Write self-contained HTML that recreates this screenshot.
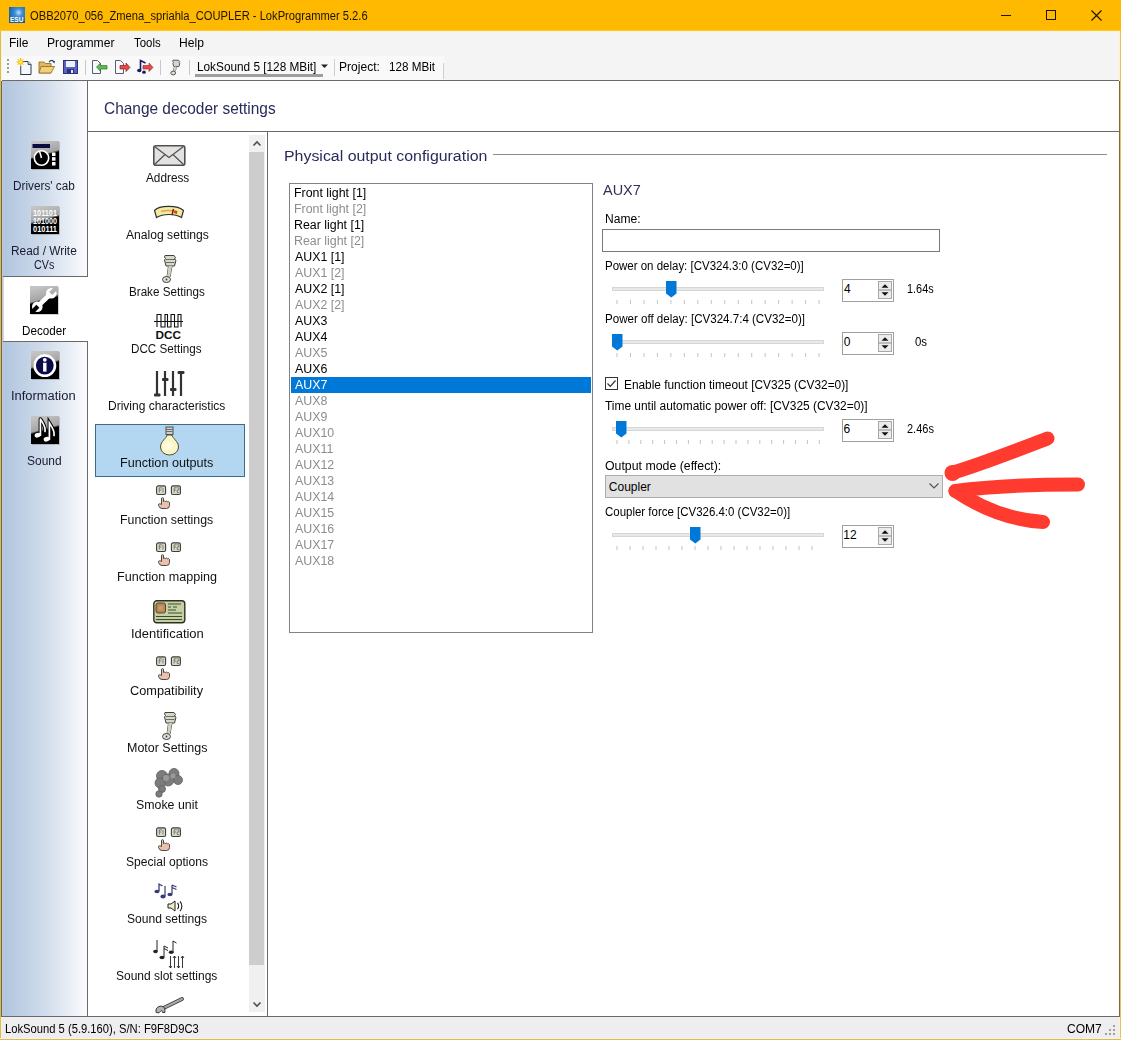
<!DOCTYPE html>
<html><head><meta charset="utf-8">
<style>
*{box-sizing:border-box;margin:0;padding:0}
html,body{width:1121px;height:1040px;overflow:hidden;background:#fff}
body{position:relative;font-family:"Liberation Sans",sans-serif;font-size:12px;color:#000}
.a{position:absolute}
.t{position:absolute;white-space:pre;line-height:1}
svg{position:absolute;overflow:visible}
</style></head><body>
<div class="a" style="left:0px;top:0px;width:1121px;height:30px;background:#FFB900;"></div>
<svg style="left:9px;top:7px" width="16" height="16"><defs><radialGradient id="esu" cx="0.6" cy="0.35" r="0.7"><stop offset="0" stop-color="#bfe3ff"/><stop offset="0.35" stop-color="#3b8fd6"/><stop offset="1" stop-color="#1a5a9a"/></radialGradient></defs><rect x="0" y="0" width="16" height="16" fill="url(#esu)"/><text x="1" y="14.5" font-family="Liberation Sans" font-weight="bold" font-size="6.5" fill="#fff">ESU</text></svg>
<div class="t" style="left:30.47px;top:9.96px;font-size:12.21px;transform:scaleX(0.9150);transform-origin:0 0;color:#1c1400;">OBB2070_056_Zmena_spriahla_COUPLER - LokProgrammer 5.2.6</div>
<div class="a" style="left:1001px;top:15px;width:10px;height:1px;background:#1c1400;"></div>
<div class="a" style="left:1046px;top:10px;width:10px;height:10px;border:1px solid #1c1400"></div>
<svg style="left:1091px;top:10px" width="11" height="11"><path d="M0.5 0.5L10.5 10.5M10.5 0.5L0.5 10.5" stroke="#1c1400" stroke-width="1.1"/></svg>
<div class="a" style="left:0px;top:30px;width:1px;height:1010px;background:#D2BC6C;"></div>
<div class="a" style="left:1px;top:31px;width:1px;height:50px;background:#FFF3C0;"></div>
<div class="a" style="left:1px;top:81px;width:1px;height:936px;background:#7A6634;"></div>
<div class="a" style="left:1px;top:1017px;width:1px;height:21px;background:#FFF3C8;"></div>
<div class="a" style="left:1120px;top:30px;width:1px;height:1010px;background:#E2C260;"></div>
<div class="a" style="left:1119px;top:31px;width:1px;height:50px;background:#FFF3C0;"></div>
<div class="a" style="left:1119px;top:81px;width:1px;height:936px;background:#7A6A35;"></div>
<div class="a" style="left:1119px;top:1017px;width:1px;height:21px;background:#FFF3C8;"></div>
<div class="a" style="left:0px;top:1038px;width:1121px;height:1px;background:#FFF3C8;"></div>
<div class="a" style="left:0px;top:1039px;width:1121px;height:1px;background:#CFBB70;"></div>
<div class="a" style="left:0px;top:30px;width:1121px;height:1px;background:#F5C842;"></div>
<div class="a" style="left:2px;top:31px;width:1117px;height:49px;background:#F4F4F4;"></div>
<div class="a" style="left:2px;top:31px;width:1117px;height:1px;background:#FFF3C8;"></div>
<div class="t" style="left:9.21px;top:37.26px;font-size:12.21px;transform:scaleX(0.9818);transform-origin:0 0;color:#000;">File</div>
<div class="t" style="left:46.50px;top:37.26px;font-size:12.21px;transform:scaleX(0.9950);transform-origin:0 0;color:#000;">Programmer</div>
<div class="t" style="left:133.74px;top:37.26px;font-size:12.21px;transform:scaleX(0.9350);transform-origin:0 0;color:#000;">Tools</div>
<div class="t" style="left:178.60px;top:37.26px;font-size:12.21px;transform:scaleX(0.9918);transform-origin:0 0;color:#000;">Help</div>
<div class="a" style="left:2px;top:80px;width:1117px;height:1px;background:#6a6a6a;"></div>
<div class="a" style="left:2px;top:56px;width:442px;height:24px;background:#F9F9F9;"></div>
<div class="a" style="left:7px;top:59px;width:2px;height:2px;background:#9a9a9a;"></div>
<div class="a" style="left:7px;top:63px;width:2px;height:2px;background:#9a9a9a;"></div>
<div class="a" style="left:7px;top:67px;width:2px;height:2px;background:#9a9a9a;"></div>
<div class="a" style="left:7px;top:71px;width:2px;height:2px;background:#9a9a9a;"></div>
<svg style="left:16px;top:58px" width="17" height="17">
<path d="M4.5 3.5H12l3 3v10h-10.5z" fill="#f4f8fc" stroke="#2a3850" stroke-width="1"/>
<path d="M12 3.5v3h3" fill="#c8d4e4" stroke="#2a3850" stroke-width="0.8"/>
<path d="M5 16V8" stroke="#8aa0c0" stroke-width="1"/>
<circle cx="4.5" cy="4" r="2.6" fill="#ffd200"/>
<path d="M4.5 0v8M0.5 4h8M1.7 1.2l5.6 5.6M7.3 1.2l-5.6 5.6" stroke="#f5b800" stroke-width="1"/>
<circle cx="4.5" cy="4" r="1.8" fill="#ffe860"/>
</svg>
<svg style="left:38px;top:59px" width="18" height="16">
<path d="M1 3h5l1.5 1.5H13V14H1z" fill="#e2b860" stroke="#8a6a20" stroke-width="0.8"/>
<path d="M3 7.5h13.5L13 14H1z" fill="#f2cf78" stroke="#8a6a20" stroke-width="0.8"/>
<path d="M11 3.2c1.5-2.5 4-2.5 5 0" fill="none" stroke="#2a4a7a" stroke-width="1.2"/>
<path d="M14.5 2.5l2 2 0.5-2.8z" fill="#2a4a7a"/>
</svg>
<svg style="left:63px;top:60px" width="15" height="14">
<rect x="0.5" y="0.5" width="14" height="13" fill="#5a62c0" stroke="#2c327a" stroke-width="1"/>
<rect x="3" y="1" width="9" height="6" fill="#eef0ff"/>
<rect x="4" y="9" width="7" height="4.5" fill="#2c327a"/>
<rect x="8" y="10" width="2" height="3" fill="#e8e8ff"/>
</svg>
<div class="a" style="left:85px;top:60px;width:1px;height:15px;background:#c8c8c8;"></div>
<svg style="left:92px;top:60px" width="16" height="14">
<path d="M0.5 0.5h5l3 3v10h-8z" fill="#f6f8fa" stroke="#40506a" stroke-width="0.9"/>
<path d="M4.5 7l4-4v2.5h6.5v3.5H8.5V11.5z" fill="#5fb85a" stroke="#2f7a2a" stroke-width="0.7"/>
</svg>
<svg style="left:115px;top:60px" width="16" height="14">
<path d="M0.5 0.5h5l3 3v10h-8z" fill="#f6f8fa" stroke="#40506a" stroke-width="0.9"/>
<path d="M15 7.5l-4 4V9H5V5.5h6V3z" fill="#e84848" stroke="#902020" stroke-width="0.7"/>
</svg>
<svg style="left:137px;top:59px" width="17" height="15">
<path d="M3.5 11V1.5l5 2.5" fill="none" stroke="#1a1a6a" stroke-width="1.6"/>
<ellipse cx="2.3" cy="11.5" rx="2.2" ry="1.8" fill="#1a1a6a"/>
<ellipse cx="7" cy="13.2" rx="1.8" ry="1.6" fill="#1a1a6a"/>
<path d="M16 8.5l-4 4V10H6V6.5h6V4z" fill="#e84848" stroke="#902020" stroke-width="0.6"/>
</svg>
<div class="a" style="left:160px;top:60px;width:1px;height:15px;background:#c8c8c8;"></div>
<svg style="left:170px;top:59px" width="11" height="17">
<path d="M3 1.2h5.5l1.2 1.3-0.8 1 1 0.8-1 3.2H3.8L2.8 4.3 3.5 3.3 2.6 2.3z" fill="#d6d6c8" stroke="#4a4a4a" stroke-width="0.9"/>
<path d="M4.5 7.5L3.2 12.5M6.8 7.5L5 12.5" stroke="#4a4a4a" stroke-width="0.8"/>
<path d="M4.5 7.5L3.2 12.5h1.8l1.8-5z" fill="#d0d0c4"/>
<ellipse cx="3.2" cy="14" rx="2.4" ry="1.9" fill="#e0e0d8" stroke="#4a4a4a" stroke-width="0.9"/>
</svg>
<div class="a" style="left:189px;top:60px;width:1px;height:15px;background:#c8c8c8;"></div>
<div class="t" style="left:196.83px;top:61.06px;font-size:12.21px;transform:scaleX(0.9666);transform-origin:0 0;color:#000;">LokSound 5 [128 MBit]</div>
<svg style="left:321px;top:64px" width="7" height="5"><path d="M0 0.5h7L3.5 4z" fill="#222"/></svg>
<div class="a" style="left:195px;top:74px;width:128px;height:3px;background:#9e9e9e;"></div>
<div class="a" style="left:334px;top:59px;width:1px;height:17px;background:#cfcfcf;"></div>
<div class="t" style="left:339.01px;top:61.06px;font-size:12.21px;transform:scaleX(0.9877);transform-origin:0 0;color:#000;">Project:</div>
<div class="t" style="left:388.72px;top:61.06px;font-size:12.21px;transform:scaleX(0.9564);transform-origin:0 0;color:#000;">128 MBit</div>
<div class="a" style="left:443px;top:63px;width:1px;height:16px;background:#cfcfcf;"></div>
<div class="a" style="left:2px;top:81px;width:86px;height:935px;background:linear-gradient(to right,#B0C5DF 0%,#D0DCEB 50%,#FCFCFE 100%);"></div>
<div class="a" style="left:87px;top:81px;width:1px;height:935px;background:#6a6a6a;"></div>
<div class="a" style="left:2px;top:81px;width:1px;height:935px;background:#C2C7CD;"></div>
<div class="a" style="left:3px;top:276px;width:85px;height:66px;background:#FFFFFF;"></div>
<div class="a" style="left:3px;top:276px;width:85px;height:1px;background:#6a6a6a;"></div>
<div class="a" style="left:3px;top:341px;width:85px;height:1px;background:#6a6a6a;"></div>
<div class="a" style="left:3px;top:277px;width:1px;height:64px;background:#d8d8d8;"></div>
<svg style="left:31px;top:141px" width="29" height="29"><defs><linearGradient id="ib" x1="0.36" y1="0" x2="0.64" y2="1"><stop offset="0" stop-color="#c4c4c4"/><stop offset="0.45" stop-color="#a4a4a4"/><stop offset="0.52" stop-color="#000"/><stop offset="1" stop-color="#000"/></linearGradient></defs><rect x="1" y="1" width="28" height="28" fill="#000" opacity="0.18"/><rect x="0" y="0" width="28" height="28" fill="url(#ib)"/><rect x="1.5" y="3" width="17.5" height="4" fill="#0a0a40"/><circle cx="10.5" cy="17" r="7.2" fill="#000" stroke="#fff" stroke-width="1.6"/><path d="M10.5 17L8.6 10.5" stroke="#fff" stroke-width="1.5"/><rect x="21" y="11.5" width="3.5" height="3.5" fill="#fff"/><rect x="21" y="16.2" width="3.5" height="3.5" fill="#fff"/><rect x="21" y="21" width="3.5" height="3.5" fill="#fff"/></svg>
<div class="t" style="left:12.53px;top:179.66px;font-size:12.21px;transform:scaleX(0.9653);transform-origin:0 0;color:#1a1a30;">Drivers' cab</div>
<svg style="left:31px;top:206px" width="29" height="29"><defs><linearGradient id="ib" x1="0.36" y1="0" x2="0.64" y2="1"><stop offset="0" stop-color="#c4c4c4"/><stop offset="0.45" stop-color="#a4a4a4"/><stop offset="0.52" stop-color="#000"/><stop offset="1" stop-color="#000"/></linearGradient></defs><rect x="1" y="1" width="28" height="28" fill="#000" opacity="0.18"/><rect x="0" y="0" width="28" height="28" fill="url(#ib)"/><text x="2" y="10" font-family="Liberation Sans" font-size="8.5" font-weight="bold" fill="#fff" textLength="24" lengthAdjust="spacingAndGlyphs">101101</text><text x="2" y="18" font-family="Liberation Sans" font-size="8.5" font-weight="bold" fill="#fff" textLength="24" lengthAdjust="spacingAndGlyphs">101000</text><text x="2" y="25.8" font-family="Liberation Sans" font-size="8.5" font-weight="bold" fill="#fff" textLength="24" lengthAdjust="spacingAndGlyphs">010111</text></svg>
<div class="t" style="left:10.52px;top:245.06px;font-size:12.21px;transform:scaleX(0.9730);transform-origin:0 0;color:#1a1a30;">Read / Write</div>
<div class="t" style="left:34.06px;top:259.46px;font-size:12.21px;transform:scaleX(0.8848);transform-origin:0 0;color:#1a1a30;">CVs</div>
<svg style="left:30px;top:286px" width="29" height="29"><defs><linearGradient id="ib" x1="0.36" y1="0" x2="0.64" y2="1"><stop offset="0" stop-color="#c4c4c4"/><stop offset="0.45" stop-color="#a4a4a4"/><stop offset="0.52" stop-color="#000"/><stop offset="1" stop-color="#000"/></linearGradient></defs><rect x="1" y="1" width="28" height="28" fill="#000" opacity="0.18"/><rect x="0" y="0" width="28" height="28" fill="url(#ib)"/><defs><mask id="wm"><rect width="28" height="28" fill="#fff"/><rect x="-2" y="-4" width="4.2" height="8" fill="#000" transform="translate(23.5,4.5) rotate(45)"/><rect x="-2" y="-4" width="4.2" height="8" fill="#000" transform="translate(5,23) rotate(45)"/></mask></defs><g mask="url(#wm)" fill="#fff"><circle cx="21.3" cy="7.2" r="5.3"/><circle cx="7.3" cy="20.8" r="5.3"/><path d="M8.5 19.5L20 8.5" stroke="#fff" stroke-width="4.6"/></g></svg>
<div class="t" style="left:21.74px;top:324.86px;font-size:12.21px;transform:scaleX(0.9564);transform-origin:0 0;color:#000;">Decoder</div>
<svg style="left:31px;top:351px" width="29" height="29"><defs><linearGradient id="ib" x1="0.36" y1="0" x2="0.64" y2="1"><stop offset="0" stop-color="#c4c4c4"/><stop offset="0.45" stop-color="#a4a4a4"/><stop offset="0.52" stop-color="#000"/><stop offset="1" stop-color="#000"/></linearGradient></defs><rect x="1" y="1" width="28" height="28" fill="#000" opacity="0.18"/><rect x="0" y="0" width="28" height="28" fill="url(#ib)"/><circle cx="13.8" cy="14.6" r="10.9" fill="#000" stroke="#000" stroke-width="1"/><circle cx="13.8" cy="14.6" r="10.2" fill="#0a0a48" stroke="#fff" stroke-width="2.6"/><circle cx="13.8" cy="8.8" r="1.9" fill="#fff"/><rect x="12.1" y="11.8" width="3.4" height="8.8" fill="#fff"/></svg>
<div class="t" style="left:10.91px;top:389.56px;font-size:12.21px;transform:scaleX(1.0577);transform-origin:0 0;color:#1a1a30;">Information</div>
<svg style="left:31px;top:416px" width="29" height="29"><defs><linearGradient id="ib" x1="0.36" y1="0" x2="0.64" y2="1"><stop offset="0" stop-color="#c4c4c4"/><stop offset="0.45" stop-color="#a4a4a4"/><stop offset="0.52" stop-color="#000"/><stop offset="1" stop-color="#000"/></linearGradient></defs><rect x="1" y="1" width="28" height="28" fill="#000" opacity="0.18"/><rect x="0" y="0" width="28" height="28" fill="url(#ib)"/><path d="M9.4 19.2V3C10.9 5.5 15 10.5 14 15.5" fill="none" stroke="#000" stroke-width="3.6" stroke-linecap="round" stroke-linejoin="round"/><ellipse cx="6.6" cy="19.2" rx="4" ry="3.2" transform="rotate(-20 6.6 19.2)" fill="#000"/><path d="M9.4 19.2V3C10.9 5.5 15 10.5 14 15.5" fill="none" stroke="#fff" stroke-width="1.7" stroke-linecap="round" stroke-linejoin="round"/><ellipse cx="6.6" cy="19.2" rx="3" ry="2.3" transform="rotate(-20 6.6 19.2)" fill="#fff"/><path d="M18.4 23.2V7C19.9 9.5 24 14.5 23 19.5" fill="none" stroke="#000" stroke-width="3.6" stroke-linecap="round"/><ellipse cx="15.6" cy="23.2" rx="4" ry="3.2" transform="rotate(-20 15.6 23.2)" fill="#000"/><path d="M18.4 23.2V7C19.9 9.5 24 14.5 23 19.5" fill="none" stroke="#fff" stroke-width="1.7" stroke-linecap="round"/><ellipse cx="15.6" cy="23.2" rx="3" ry="2.3" transform="rotate(-20 15.6 23.2)" fill="#fff"/></svg>
<div class="t" style="left:26.76px;top:454.56px;font-size:12.21px;transform:scaleX(0.9802);transform-origin:0 0;color:#1a1a30;">Sound</div>
<div class="t" style="left:103.73px;top:99.52px;font-size:16.28px;transform:scaleX(0.9491);transform-origin:0 0;color:#2a2a5a;">Change decoder settings</div>
<div class="a" style="left:88px;top:131px;width:1031px;height:1px;background:#6a6a6a;"></div>
<div class="a" style="left:249px;top:135px;width:16px;height:877px;background:#F0F0F0;"></div>
<div class="a" style="left:249px;top:152px;width:15px;height:813px;background:#CDCDCD;"></div>
<svg style="left:249px;top:135px" width="16" height="17"><path d="M4.5 10.5L8 7l3.5 3.5" fill="none" stroke="#505050" stroke-width="1.6"/></svg>
<svg style="left:249px;top:996px" width="16" height="17"><path d="M4.5 6.5L8 10l3.5-3.5" fill="none" stroke="#505050" stroke-width="1.6"/></svg>
<div class="a" style="left:267px;top:131px;width:1px;height:885px;background:#6a6a6a;"></div>
<div class="a" style="left:95px;top:424px;width:150px;height:53px;background:#B3D6F1;border:1px solid #3B6C8C"></div>
<div class="t" style="left:145.67px;top:172.26px;font-size:12.21px;transform:scaleX(0.9657);transform-origin:0 0;color:#111;">Address</div>
<div class="t" style="left:125.84px;top:229.26px;font-size:12.21px;transform:scaleX(0.9931);transform-origin:0 0;color:#111;">Analog settings</div>
<div class="t" style="left:128.94px;top:286.26px;font-size:12.21px;transform:scaleX(0.9544);transform-origin:0 0;color:#111;">Brake Settings</div>
<div class="t" style="left:131.49px;top:343.26px;font-size:12.21px;transform:scaleX(0.9556);transform-origin:0 0;color:#111;">DCC Settings</div>
<div class="t" style="left:108.11px;top:400.26px;font-size:12.21px;transform:scaleX(0.9833);transform-origin:0 0;color:#111;">Driving characteristics</div>
<div class="t" style="left:120.11px;top:457.26px;font-size:12.21px;transform:scaleX(1.0343);transform-origin:0 0;color:#111;">Function outputs</div>
<div class="t" style="left:120.18px;top:514.26px;font-size:12.21px;transform:scaleX(1.0103);transform-origin:0 0;color:#111;">Function settings</div>
<div class="t" style="left:117.01px;top:571.26px;font-size:12.21px;transform:scaleX(1.0298);transform-origin:0 0;color:#111;">Function mapping</div>
<div class="t" style="left:130.50px;top:628.26px;font-size:12.21px;transform:scaleX(1.0621);transform-origin:0 0;color:#111;">Identification</div>
<div class="t" style="left:130.26px;top:685.26px;font-size:12.21px;transform:scaleX(1.0454);transform-origin:0 0;color:#111;">Compatibility</div>
<div class="t" style="left:126.60px;top:742.26px;font-size:12.21px;transform:scaleX(1.0215);transform-origin:0 0;color:#111;">Motor Settings</div>
<div class="t" style="left:135.94px;top:799.26px;font-size:12.21px;transform:scaleX(1.0126);transform-origin:0 0;color:#111;">Smoke unit</div>
<div class="t" style="left:126.01px;top:856.26px;font-size:12.21px;transform:scaleX(0.9910);transform-origin:0 0;color:#111;">Special options</div>
<div class="t" style="left:127.06px;top:913.26px;font-size:12.21px;transform:scaleX(0.9901);transform-origin:0 0;color:#111;">Sound settings</div>
<div class="t" style="left:116.36px;top:970.26px;font-size:12.21px;transform:scaleX(0.9825);transform-origin:0 0;color:#111;">Sound slot settings</div>
<svg style="left:153px;top:145px" width="33" height="22"><rect x="0.8" y="0.8" width="31" height="19.5" rx="2" fill="#e4e2e0" stroke="#505050" stroke-width="1.6"/><path d="M1.5 1.5L16 12.5L30.5 1.5M1.5 19.5L12 9.5M30.5 19.5L20 9.5" fill="none" stroke="#505050" stroke-width="1.2"/></svg>
<svg style="left:153px;top:204px" width="32" height="16"><path d="M1.5 6.5C6 1 25 1 30.5 6.5L28.5 13.5C22 9.5 10 9.5 3.5 13.5Z" fill="#f2eca0" stroke="#303030" stroke-width="1.2"/><path d="M8 7.5C14 6 18 6 24 7.5" stroke="#e8a060" stroke-width="1.5" fill="none"/><path d="M20.5 5L19 11" stroke="#702010" stroke-width="1.4"/><path d="M21.5 6.5l3 0.8-0.6 2.6-3-0.8z" fill="#e04010"/></svg>
<svg style="left:161px;top:254px" width="18" height="30"><path d="M4 1.5h9l1.5 2-1 1.5 1.5 1.2-1.5 5.8H5L3.5 6 4.5 4.5 3.5 3z" fill="#d8d8c8" stroke="#404040" stroke-width="1"/><path d="M5 5.5h9M5 8.5h8.5" stroke="#505050" stroke-width="0.8"/><path d="M7.5 12l-1.5 11M11 12l-2 11" stroke="#404040" stroke-width="1"/><path d="M7.5 12l-1.5 11h3l2-11z" fill="#d0d0c0"/><ellipse cx="5.5" cy="25.5" rx="4" ry="3" fill="#e0e0d4" stroke="#404040" stroke-width="1"/><circle cx="5.5" cy="25.5" r="0.9" fill="#404040"/></svg>
<svg style="left:161px;top:711px" width="18" height="30"><path d="M4 1.5h9l1.5 2-1 1.5 1.5 1.2-1.5 5.8H5L3.5 6 4.5 4.5 3.5 3z" fill="#d8d8c8" stroke="#404040" stroke-width="1"/><path d="M5 5.5h9M5 8.5h8.5" stroke="#505050" stroke-width="0.8"/><path d="M7.5 12l-1.5 11M11 12l-2 11" stroke="#404040" stroke-width="1"/><path d="M7.5 12l-1.5 11h3l2-11z" fill="#d0d0c0"/><ellipse cx="5.5" cy="25.5" rx="4" ry="3" fill="#e0e0d4" stroke="#404040" stroke-width="1"/><circle cx="5.5" cy="25.5" r="0.9" fill="#404040"/></svg>
<svg style="left:153px;top:313px" width="32" height="27"><path d="M1 8.5H30" stroke="#111" stroke-width="1"/><path d="M4 14V1.5h4V14h4V1.5h2.5V14H18V1.5h3.5V14H25V1.5h3V14" fill="none" stroke="#111" stroke-width="1.1"/><text x="2.5" y="25.5" font-family="Liberation Sans" font-weight="bold" font-size="10.5" fill="#111" textLength="25.5" lengthAdjust="spacingAndGlyphs">DCC</text></svg>
<svg style="left:153px;top:369px" width="33" height="30"><g stroke="#333" stroke-width="2.2"><path d="M4 2V27M12 2V27M20 2V27M28 4V27"/></g><g fill="#333"><rect x="1" y="24.5" width="6.5" height="3" rx="1"/><rect x="9" y="9" width="6.5" height="3" rx="1"/><rect x="17" y="19" width="6.5" height="3" rx="1"/><rect x="24.5" y="2" width="7" height="3" rx="1.2"/></g></svg>
<svg style="left:159px;top:426px" width="22" height="30"><rect x="7" y="1" width="7" height="7.5" fill="#cfcfcf" stroke="#404040" stroke-width="0.9"/><path d="M7.5 3.5h6M7.5 5.5h6" stroke="#404040" stroke-width="0.7"/><path d="M8 9C8 12 1.5 15 1.5 21a9 8 0 0 0 18 0c0-6-6.5-9-6.5-12z" fill="#f9f5c8" stroke="#505030" stroke-width="1"/><ellipse cx="9" cy="20" rx="5" ry="4" fill="#fffbe0" opacity="0.8"/></svg>
<svg style="left:155px;top:485px" width="27" height="24"><rect x="1.6" y="0.9" width="9" height="8.6" rx="1.6" fill="#d9dcc9" stroke="#3c3c3c" stroke-width="1.1"/><rect x="16.4" y="0.9" width="9" height="8.6" rx="1.6" fill="#d9dcc9" stroke="#3c3c3c" stroke-width="1.1"/><path d="M4.3 7.6V2.8h2.6M4.3 5h2.1M8 2.8v4.8" stroke="#606058" stroke-width="0.75" fill="none"/><path d="M19.1 7.6V2.8h2.6M19.1 5h2.1M22.2 2.8h1.6v2.2h-1.6v2.6h1.8" stroke="#606058" stroke-width="0.75" fill="none"/><path d="M6.5 19V13.2Q7.5 12 8.5 13.2V16.5Q9.5 15.5 10.5 16.5Q11.5 15.5 12.5 16.8Q13.5 16 14.5 17.5V20.5Q14.5 23.5 11.5 23.5H7Q4.5 23.5 3.5 20.5Q3 19 4.5 18.8Q5.8 18.8 6.5 19.5Z" fill="#ecc0ac" stroke="#3a3a3a" stroke-width="0.9"/></svg>
<svg style="left:155px;top:542px" width="27" height="24"><rect x="1.6" y="0.9" width="9" height="8.6" rx="1.6" fill="#d9dcc9" stroke="#3c3c3c" stroke-width="1.1"/><rect x="16.4" y="0.9" width="9" height="8.6" rx="1.6" fill="#d9dcc9" stroke="#3c3c3c" stroke-width="1.1"/><path d="M4.3 7.6V2.8h2.6M4.3 5h2.1M8 2.8v4.8" stroke="#606058" stroke-width="0.75" fill="none"/><path d="M19.1 7.6V2.8h2.6M19.1 5h2.1M22.2 2.8h1.6v2.2h-1.6v2.6h1.8" stroke="#606058" stroke-width="0.75" fill="none"/><path d="M6.5 19V13.2Q7.5 12 8.5 13.2V16.5Q9.5 15.5 10.5 16.5Q11.5 15.5 12.5 16.8Q13.5 16 14.5 17.5V20.5Q14.5 23.5 11.5 23.5H7Q4.5 23.5 3.5 20.5Q3 19 4.5 18.8Q5.8 18.8 6.5 19.5Z" fill="#ecc0ac" stroke="#3a3a3a" stroke-width="0.9"/></svg>
<svg style="left:155px;top:656px" width="27" height="24"><rect x="1.6" y="0.9" width="9" height="8.6" rx="1.6" fill="#d9dcc9" stroke="#3c3c3c" stroke-width="1.1"/><rect x="16.4" y="0.9" width="9" height="8.6" rx="1.6" fill="#d9dcc9" stroke="#3c3c3c" stroke-width="1.1"/><path d="M4.3 7.6V2.8h2.6M4.3 5h2.1M8 2.8v4.8" stroke="#606058" stroke-width="0.75" fill="none"/><path d="M19.1 7.6V2.8h2.6M19.1 5h2.1M22.2 2.8h1.6v2.2h-1.6v2.6h1.8" stroke="#606058" stroke-width="0.75" fill="none"/><path d="M6.5 19V13.2Q7.5 12 8.5 13.2V16.5Q9.5 15.5 10.5 16.5Q11.5 15.5 12.5 16.8Q13.5 16 14.5 17.5V20.5Q14.5 23.5 11.5 23.5H7Q4.5 23.5 3.5 20.5Q3 19 4.5 18.8Q5.8 18.8 6.5 19.5Z" fill="#ecc0ac" stroke="#3a3a3a" stroke-width="0.9"/></svg>
<svg style="left:155px;top:827px" width="27" height="24"><rect x="1.6" y="0.9" width="9" height="8.6" rx="1.6" fill="#d9dcc9" stroke="#3c3c3c" stroke-width="1.1"/><rect x="16.4" y="0.9" width="9" height="8.6" rx="1.6" fill="#d9dcc9" stroke="#3c3c3c" stroke-width="1.1"/><path d="M4.3 7.6V2.8h2.6M4.3 5h2.1M8 2.8v4.8" stroke="#606058" stroke-width="0.75" fill="none"/><path d="M19.1 7.6V2.8h2.6M19.1 5h2.1M22.2 2.8h1.6v2.2h-1.6v2.6h1.8" stroke="#606058" stroke-width="0.75" fill="none"/><path d="M6.5 19V13.2Q7.5 12 8.5 13.2V16.5Q9.5 15.5 10.5 16.5Q11.5 15.5 12.5 16.8Q13.5 16 14.5 17.5V20.5Q14.5 23.5 11.5 23.5H7Q4.5 23.5 3.5 20.5Q3 19 4.5 18.8Q5.8 18.8 6.5 19.5Z" fill="#ecc0ac" stroke="#3a3a3a" stroke-width="0.9"/></svg>
<svg style="left:153px;top:600px" width="33" height="24"><rect x="0.8" y="0.8" width="31" height="22" rx="3" fill="#c4d0a4" stroke="#303020" stroke-width="1.4"/><rect x="3" y="3" width="9.5" height="10" rx="2" fill="#b8885a" stroke="#4a3a20" stroke-width="0.9"/><circle cx="7.7" cy="8" r="2.5" fill="#d09868"/><path d="M15 4h13M15 7h3M20 7h4M15 10h8M15 13h14M3 16.5h26M3 19.5h26" stroke="#404a30" stroke-width="1"/></svg>
<svg style="left:154px;top:768px" width="30" height="30"><g fill="#7c7c7c" stroke="#606060" stroke-width="0.8"><circle cx="8" cy="8" r="5.5"/><circle cx="20" cy="5.5" r="5"/><circle cx="24" cy="12" r="4.5"/><circle cx="14" cy="12" r="6"/><circle cx="6" cy="15" r="5"/><circle cx="8" cy="21" r="3.5"/><circle cx="5" cy="26" r="3.2"/></g><g fill="#9a9a9a"><circle cx="12" cy="10" r="3"/><circle cx="19" cy="8" r="2.5"/></g></svg>
<svg style="left:154px;top:882px" width="30" height="30"><g fill="#3a3a78" stroke="#3a3a78"><path d="M5 9V2l3.5 2" fill="none" stroke-width="1.3"/><ellipse cx="3" cy="9.5" rx="2.6" ry="1.8" stroke="none"/><path d="M11 14V4" fill="none" stroke-width="1.2"/><ellipse cx="9" cy="14.5" rx="2.6" ry="2" stroke="none"/><path d="M18 12V3M18 3l4.5 2M18 5.5l4.5 2" fill="none" stroke-width="1.2"/><ellipse cx="16" cy="12.5" rx="2.6" ry="1.8" stroke="none"/></g><path d="M14 22h3l4-3v10l-4-3h-3z" fill="#f0f0c0" stroke="#202020" stroke-width="1"/><path d="M23.5 21c1.5 1.5 1.5 4.5 0 6M26 19.5c2.5 2.5 2.5 7 0 9.5" fill="none" stroke="#202020" stroke-width="1.1"/></svg>
<svg style="left:153px;top:939px" width="32" height="31"><g fill="#222" stroke="#222"><path d="M4 12V1" fill="none" stroke-width="1"/><ellipse cx="2.5" cy="12.5" rx="2.3" ry="1.7" stroke="none"/><path d="M11 18V7M11 7l4 2M11 9.5l4 2" fill="none" stroke-width="1"/><ellipse cx="9" cy="18.5" rx="2.5" ry="1.8" stroke="none"/><path d="M20 13V2l3.5 2" fill="none" stroke-width="1"/><ellipse cx="18.2" cy="13.3" rx="2.4" ry="1.8" stroke="none"/></g><g stroke="#222" stroke-width="0.9" fill="none"><path d="M17.5 17v12M21.5 17v12M25.5 17v12M29.5 17v12"/><path d="M16 27l1.5 2 1.5-2M20 19l1.5-2 1.5 2M24 27l1.5 2 1.5-2M28 19l1.5-2 1.5 2"/></g></svg>
<svg style="left:155px;top:997px" width="29" height="17"><path d="M8.5 11L27 2" stroke="#404040" stroke-width="3.8" stroke-linecap="round"/><path d="M8.5 11L27 2" stroke="#a8a8a8" stroke-width="2" stroke-linecap="round"/><path d="M1.2 15.5C0.2 12 2.5 9 6.5 9.2C9.5 9.5 10.5 12 9.8 15.5H7.6C7.8 13.8 6.8 13.2 5.6 14.2L4 15.8z" fill="#b4b4b4" stroke="#333" stroke-width="1"/></svg>
<div class="t" style="left:283.89px;top:148.38px;font-size:15.26px;transform:scaleX(1.0430);transform-origin:0 0;color:#2a2a5a;">Physical output configuration</div>
<div class="a" style="left:493px;top:154px;width:614px;height:1px;background:#8a8a8a;"></div>
<div class="a" style="left:289px;top:183px;width:304px;height:450px;background:#fff;border:1px solid #828282"></div>
<div class="a" style="left:291px;top:377px;width:300px;height:16px;background:#0078D7;"></div>
<div class="t" style="left:293.88px;top:187.26px;font-size:12.21px;transform:scaleX(1.0147);transform-origin:0 0;color:#000;">Front light [1]</div>
<div class="t" style="left:293.88px;top:203.26px;font-size:12.21px;transform:scaleX(1.0147);transform-origin:0 0;color:#8d8d8d;">Front light [2]</div>
<div class="t" style="left:293.88px;top:219.26px;font-size:12.21px;transform:scaleX(1.0147);transform-origin:0 0;color:#000;">Rear light [1]</div>
<div class="t" style="left:293.88px;top:235.26px;font-size:12.21px;transform:scaleX(1.0147);transform-origin:0 0;color:#8d8d8d;">Rear light [2]</div>
<div class="t" style="left:294.87px;top:251.26px;font-size:12.21px;transform:scaleX(1.0147);transform-origin:0 0;color:#000;">AUX1 [1]</div>
<div class="t" style="left:294.87px;top:267.26px;font-size:12.21px;transform:scaleX(1.0147);transform-origin:0 0;color:#8d8d8d;">AUX1 [2]</div>
<div class="t" style="left:294.87px;top:283.26px;font-size:12.21px;transform:scaleX(1.0147);transform-origin:0 0;color:#000;">AUX2 [1]</div>
<div class="t" style="left:294.87px;top:299.26px;font-size:12.21px;transform:scaleX(1.0147);transform-origin:0 0;color:#8d8d8d;">AUX2 [2]</div>
<div class="t" style="left:294.87px;top:315.26px;font-size:12.21px;transform:scaleX(1.0147);transform-origin:0 0;color:#000;">AUX3</div>
<div class="t" style="left:294.87px;top:331.26px;font-size:12.21px;transform:scaleX(1.0147);transform-origin:0 0;color:#000;">AUX4</div>
<div class="t" style="left:294.87px;top:347.26px;font-size:12.21px;transform:scaleX(1.0147);transform-origin:0 0;color:#8d8d8d;">AUX5</div>
<div class="t" style="left:294.87px;top:363.26px;font-size:12.21px;transform:scaleX(1.0147);transform-origin:0 0;color:#000;">AUX6</div>
<div class="t" style="left:294.87px;top:379.26px;font-size:12.21px;transform:scaleX(1.0147);transform-origin:0 0;color:#fff;">AUX7</div>
<div class="t" style="left:294.87px;top:395.26px;font-size:12.21px;transform:scaleX(1.0147);transform-origin:0 0;color:#8d8d8d;">AUX8</div>
<div class="t" style="left:294.87px;top:411.26px;font-size:12.21px;transform:scaleX(1.0147);transform-origin:0 0;color:#8d8d8d;">AUX9</div>
<div class="t" style="left:294.87px;top:427.26px;font-size:12.21px;transform:scaleX(1.0147);transform-origin:0 0;color:#8d8d8d;">AUX10</div>
<div class="t" style="left:294.87px;top:443.26px;font-size:12.21px;transform:scaleX(1.0147);transform-origin:0 0;color:#8d8d8d;">AUX11</div>
<div class="t" style="left:294.87px;top:459.26px;font-size:12.21px;transform:scaleX(1.0147);transform-origin:0 0;color:#8d8d8d;">AUX12</div>
<div class="t" style="left:294.87px;top:475.26px;font-size:12.21px;transform:scaleX(1.0147);transform-origin:0 0;color:#8d8d8d;">AUX13</div>
<div class="t" style="left:294.87px;top:491.26px;font-size:12.21px;transform:scaleX(1.0147);transform-origin:0 0;color:#8d8d8d;">AUX14</div>
<div class="t" style="left:294.87px;top:507.26px;font-size:12.21px;transform:scaleX(1.0147);transform-origin:0 0;color:#8d8d8d;">AUX15</div>
<div class="t" style="left:294.87px;top:523.26px;font-size:12.21px;transform:scaleX(1.0147);transform-origin:0 0;color:#8d8d8d;">AUX16</div>
<div class="t" style="left:294.87px;top:539.26px;font-size:12.21px;transform:scaleX(1.0147);transform-origin:0 0;color:#8d8d8d;">AUX17</div>
<div class="t" style="left:294.87px;top:555.26px;font-size:12.21px;transform:scaleX(1.0147);transform-origin:0 0;color:#8d8d8d;">AUX18</div>
<div class="t" style="left:603.46px;top:182.83px;font-size:14.85px;transform:scaleX(0.9739);transform-origin:0 0;color:#30305a;">AUX7</div>
<div class="t" style="left:604.70px;top:213.06px;font-size:12.21px;transform:scaleX(0.9897);transform-origin:0 0;color:#000;">Name:</div>
<div class="a" style="left:602px;top:229px;width:338px;height:23px;background:#fff;border:1px solid #7a7a7a"></div>
<div class="t" style="left:604.85px;top:260.06px;font-size:12.21px;transform:scaleX(0.9406);transform-origin:0 0;color:#000;">Power on delay: [CV324.3:0 (CV32=0)]</div>
<div class="a" style="left:612px;top:287px;width:212px;height:4px;background:#E7EAEA;border:1px solid #d6d6d6"></div>
<svg style="left:612px;top:300px" width="212" height="4"><rect x="4.50" y="0" width="1" height="4" fill="#c4c4c4"/><rect x="17.97" y="0" width="1" height="4" fill="#c4c4c4"/><rect x="31.44" y="0" width="1" height="4" fill="#c4c4c4"/><rect x="44.91" y="0" width="1" height="4" fill="#c4c4c4"/><rect x="58.38" y="0" width="1" height="4" fill="#c4c4c4"/><rect x="71.85" y="0" width="1" height="4" fill="#c4c4c4"/><rect x="85.32" y="0" width="1" height="4" fill="#c4c4c4"/><rect x="98.79" y="0" width="1" height="4" fill="#c4c4c4"/><rect x="112.26" y="0" width="1" height="4" fill="#c4c4c4"/><rect x="125.73" y="0" width="1" height="4" fill="#c4c4c4"/><rect x="139.20" y="0" width="1" height="4" fill="#c4c4c4"/><rect x="152.67" y="0" width="1" height="4" fill="#c4c4c4"/><rect x="166.14" y="0" width="1" height="4" fill="#c4c4c4"/><rect x="179.61" y="0" width="1" height="4" fill="#c4c4c4"/><rect x="193.08" y="0" width="1" height="4" fill="#c4c4c4"/><rect x="206.55" y="0" width="1" height="4" fill="#c4c4c4"/></svg>
<svg style="left:666px;top:281px" width="11" height="17"><path d="M0 0h10.5v12.5L5.25 16.5 0 12.5z" fill="#0078D7"/></svg>
<div class="a" style="left:842px;top:279px;width:52px;height:23px;background:#fff;border:1px solid #a0a0a0"></div>
<div class="t" style="left:843.93px;top:283.14px;font-size:12.00px;color:#000;">4</div>
<svg style="left:878px;top:281px" width="14" height="18"><rect x="0.5" y="0.5" width="13" height="17" fill="#ececec" stroke="#a8a8a8" stroke-width="1"/><path d="M1 9h12" stroke="#a8a8a8" stroke-width="1.4"/><path d="M3.5 6.8h7L7 3.3z" fill="#111"/><path d="M3.5 11.2h7L7 14.7z" fill="#111"/></svg>
<div class="t" style="left:906.68px;top:282.96px;font-size:12.21px;transform:scaleX(0.8935);transform-origin:0 0;color:#000;">1.64s</div>
<div class="t" style="left:604.55px;top:313.06px;font-size:12.21px;transform:scaleX(0.9478);transform-origin:0 0;color:#000;">Power off delay: [CV324.7:4 (CV32=0)]</div>
<div class="a" style="left:612px;top:340px;width:212px;height:4px;background:#E7EAEA;border:1px solid #d6d6d6"></div>
<svg style="left:612px;top:353px" width="212" height="4"><rect x="4.50" y="0" width="1" height="4" fill="#c4c4c4"/><rect x="17.97" y="0" width="1" height="4" fill="#c4c4c4"/><rect x="31.44" y="0" width="1" height="4" fill="#c4c4c4"/><rect x="44.91" y="0" width="1" height="4" fill="#c4c4c4"/><rect x="58.38" y="0" width="1" height="4" fill="#c4c4c4"/><rect x="71.85" y="0" width="1" height="4" fill="#c4c4c4"/><rect x="85.32" y="0" width="1" height="4" fill="#c4c4c4"/><rect x="98.79" y="0" width="1" height="4" fill="#c4c4c4"/><rect x="112.26" y="0" width="1" height="4" fill="#c4c4c4"/><rect x="125.73" y="0" width="1" height="4" fill="#c4c4c4"/><rect x="139.20" y="0" width="1" height="4" fill="#c4c4c4"/><rect x="152.67" y="0" width="1" height="4" fill="#c4c4c4"/><rect x="166.14" y="0" width="1" height="4" fill="#c4c4c4"/><rect x="179.61" y="0" width="1" height="4" fill="#c4c4c4"/><rect x="193.08" y="0" width="1" height="4" fill="#c4c4c4"/><rect x="206.55" y="0" width="1" height="4" fill="#c4c4c4"/></svg>
<svg style="left:612px;top:334px" width="11" height="17"><path d="M0 0h10.5v12.5L5.25 16.5 0 12.5z" fill="#0078D7"/></svg>
<div class="a" style="left:842px;top:332px;width:52px;height:23px;background:#fff;border:1px solid #a0a0a0"></div>
<div class="t" style="left:843.72px;top:336.14px;font-size:12.00px;color:#000;">0</div>
<svg style="left:878px;top:334px" width="14" height="18"><rect x="0.5" y="0.5" width="13" height="17" fill="#ececec" stroke="#a8a8a8" stroke-width="1"/><path d="M1 9h12" stroke="#a8a8a8" stroke-width="1.4"/><path d="M3.5 6.8h7L7 3.3z" fill="#111"/><path d="M3.5 11.2h7L7 14.7z" fill="#111"/></svg>
<div class="t" style="left:915.34px;top:335.96px;font-size:12.21px;transform:scaleX(0.9361);transform-origin:0 0;color:#000;">0s</div>
<svg style="left:605px;top:377px" width="13" height="13"><rect x="0.5" y="0.5" width="12" height="12" fill="#fff" stroke="#333" stroke-width="1"/><path d="M2.5 6.5l2.8 2.8L10.5 3.5" fill="none" stroke="#333" stroke-width="1.2"/></svg>
<div class="t" style="left:623.72px;top:378.76px;font-size:12.21px;transform:scaleX(0.9715);transform-origin:0 0;color:#000;">Enable function timeout [CV325 (CV32=0)]</div>
<div class="t" style="left:605.33px;top:400.06px;font-size:12.21px;transform:scaleX(0.9764);transform-origin:0 0;color:#000;">Time until automatic power off: [CV325 (CV32=0)]</div>
<div class="a" style="left:612px;top:427px;width:212px;height:4px;background:#E7EAEA;border:1px solid #d6d6d6"></div>
<svg style="left:612px;top:440px" width="212" height="4"><rect x="4.50" y="0" width="1" height="4" fill="#c4c4c4"/><rect x="16.40" y="0" width="1" height="4" fill="#c4c4c4"/><rect x="28.30" y="0" width="1" height="4" fill="#c4c4c4"/><rect x="40.20" y="0" width="1" height="4" fill="#c4c4c4"/><rect x="52.10" y="0" width="1" height="4" fill="#c4c4c4"/><rect x="64.00" y="0" width="1" height="4" fill="#c4c4c4"/><rect x="75.90" y="0" width="1" height="4" fill="#c4c4c4"/><rect x="87.80" y="0" width="1" height="4" fill="#c4c4c4"/><rect x="99.70" y="0" width="1" height="4" fill="#c4c4c4"/><rect x="111.60" y="0" width="1" height="4" fill="#c4c4c4"/><rect x="123.50" y="0" width="1" height="4" fill="#c4c4c4"/><rect x="135.40" y="0" width="1" height="4" fill="#c4c4c4"/><rect x="147.30" y="0" width="1" height="4" fill="#c4c4c4"/><rect x="159.20" y="0" width="1" height="4" fill="#c4c4c4"/><rect x="171.10" y="0" width="1" height="4" fill="#c4c4c4"/><rect x="183.00" y="0" width="1" height="4" fill="#c4c4c4"/><rect x="194.90" y="0" width="1" height="4" fill="#c4c4c4"/><rect x="206.80" y="0" width="1" height="4" fill="#c4c4c4"/></svg>
<svg style="left:616px;top:421px" width="11" height="17"><path d="M0 0h10.5v12.5L5.25 16.5 0 12.5z" fill="#0078D7"/></svg>
<div class="a" style="left:842px;top:419px;width:52px;height:23px;background:#fff;border:1px solid #a0a0a0"></div>
<div class="t" style="left:843.60px;top:423.14px;font-size:12.00px;color:#000;">6</div>
<svg style="left:878px;top:421px" width="14" height="18"><rect x="0.5" y="0.5" width="13" height="17" fill="#ececec" stroke="#a8a8a8" stroke-width="1"/><path d="M1 9h12" stroke="#a8a8a8" stroke-width="1.4"/><path d="M3.5 6.8h7L7 3.3z" fill="#111"/><path d="M3.5 11.2h7L7 14.7z" fill="#111"/></svg>
<div class="t" style="left:906.65px;top:422.96px;font-size:12.21px;transform:scaleX(0.9014);transform-origin:0 0;color:#000;">2.46s</div>
<div class="t" style="left:605.21px;top:459.66px;font-size:12.21px;transform:scaleX(1.0101);transform-origin:0 0;color:#000;">Output mode (effect):</div>
<div class="a" style="left:605px;top:475px;width:338px;height:23px;background:#E1E1E1;border:1px solid #ADADAD"></div>
<div class="t" style="left:608.80px;top:481.44px;font-size:12.00px;color:#000;">Coupler</div>
<svg style="left:929px;top:483px" width="11" height="7"><path d="M0.5 0.5L5 5l4.5-4.5" fill="none" stroke="#505050" stroke-width="1.1"/></svg>
<div class="t" style="left:605.23px;top:506.46px;font-size:12.21px;transform:scaleX(0.9398);transform-origin:0 0;color:#000;">Coupler force [CV326.4:0 (CV32=0)]</div>
<div class="a" style="left:612px;top:533px;width:212px;height:4px;background:#E7EAEA;border:1px solid #d6d6d6"></div>
<svg style="left:612px;top:546px" width="212" height="4"><rect x="4.50" y="0" width="1" height="4" fill="#c4c4c4"/><rect x="17.50" y="0" width="1" height="4" fill="#c4c4c4"/><rect x="30.50" y="0" width="1" height="4" fill="#c4c4c4"/><rect x="43.50" y="0" width="1" height="4" fill="#c4c4c4"/><rect x="56.50" y="0" width="1" height="4" fill="#c4c4c4"/><rect x="69.50" y="0" width="1" height="4" fill="#c4c4c4"/><rect x="82.50" y="0" width="1" height="4" fill="#c4c4c4"/><rect x="95.50" y="0" width="1" height="4" fill="#c4c4c4"/><rect x="108.50" y="0" width="1" height="4" fill="#c4c4c4"/><rect x="121.50" y="0" width="1" height="4" fill="#c4c4c4"/><rect x="134.50" y="0" width="1" height="4" fill="#c4c4c4"/><rect x="147.50" y="0" width="1" height="4" fill="#c4c4c4"/><rect x="160.50" y="0" width="1" height="4" fill="#c4c4c4"/><rect x="173.50" y="0" width="1" height="4" fill="#c4c4c4"/><rect x="186.50" y="0" width="1" height="4" fill="#c4c4c4"/><rect x="199.50" y="0" width="1" height="4" fill="#c4c4c4"/></svg>
<svg style="left:690px;top:527px" width="11" height="17"><path d="M0 0h10.5v12.5L5.25 16.5 0 12.5z" fill="#0078D7"/></svg>
<div class="a" style="left:842px;top:525px;width:52px;height:23px;background:#fff;border:1px solid #a0a0a0"></div>
<div class="t" style="left:843.30px;top:529.14px;font-size:12.00px;color:#000;">12</div>
<svg style="left:878px;top:527px" width="14" height="18"><rect x="0.5" y="0.5" width="13" height="17" fill="#ececec" stroke="#a8a8a8" stroke-width="1"/><path d="M1 9h12" stroke="#a8a8a8" stroke-width="1.4"/><path d="M3.5 6.8h7L7 3.3z" fill="#111"/><path d="M3.5 11.2h7L7 14.7z" fill="#111"/></svg>
<svg style="left:0;top:0" width="1121" height="1040"><g fill="none" stroke="#FF3B30" stroke-linecap="round" stroke-linejoin="round"><path d="M1047.5 438.5C1015 451 985 463 952 473" stroke-width="14"/><circle cx="952.5" cy="473" r="8" fill="#FF3B30" stroke="none"/><path d="M1078 484.5C1040 484.5 992 486 955.5 491" stroke-width="14"/><path d="M955.5 491C984 510 1012 520 1043 522" stroke-width="14"/></g></svg>
<div class="a" style="left:2px;top:1016px;width:1117px;height:1px;background:#6a6a6a;"></div>
<div class="a" style="left:2px;top:1017px;width:1117px;height:21px;background:#EEEEF0;"></div>
<div class="t" style="left:4.68px;top:1023.06px;font-size:12.21px;transform:scaleX(0.9182);transform-origin:0 0;color:#000;">LokSound 5 (5.9.160), S/N: F9F8D9C3</div>
<div class="t" style="left:1067.00px;top:1023.06px;font-size:12.21px;transform:scaleX(0.9873);transform-origin:0 0;color:#000;">COM7</div>
<svg style="left:1104px;top:1024px" width="13" height="13"><g fill="#a0a0a0"><rect x="9" y="1" width="2" height="2"/><rect x="5" y="5" width="2" height="2"/><rect x="9" y="5" width="2" height="2"/><rect x="1" y="9" width="2" height="2"/><rect x="5" y="9" width="2" height="2"/><rect x="9" y="9" width="2" height="2"/></g></svg>
</body></html>
